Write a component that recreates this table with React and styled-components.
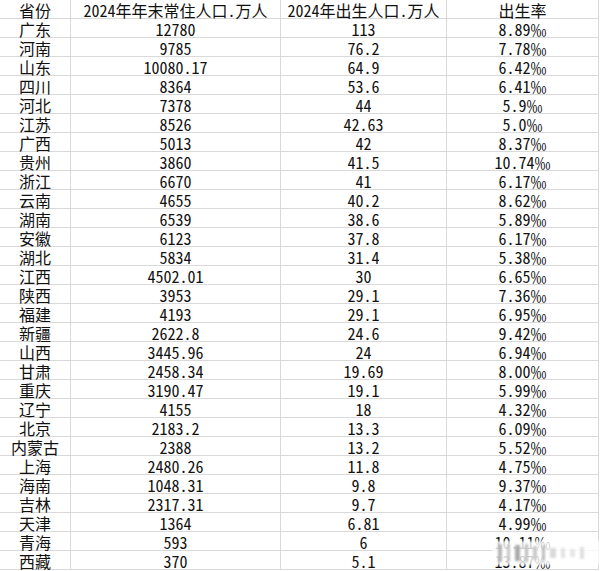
import React from 'react';
import styled, { createGlobalStyle } from 'styled-components';

const GlobalStyle = createGlobalStyle`
  html, body {
    margin: 0;
    padding: 0;
    background: #fff;
  }
`;

const rows = [
  ['广东', '12780', '113', '8.89'],
  ['河南', '9785', '76.2', '7.78'],
  ['山东', '10080.17', '64.9', '6.42'],
  ['四川', '8364', '53.6', '6.41'],
  ['河北', '7378', '44', '5.9'],
  ['江苏', '8526', '42.63', '5.0'],
  ['广西', '5013', '42', '8.37'],
  ['贵州', '3860', '41.5', '10.74'],
  ['浙江', '6670', '41', '6.17'],
  ['云南', '4655', '40.2', '8.62'],
  ['湖南', '6539', '38.6', '5.89'],
  ['安徽', '6123', '37.8', '6.17'],
  ['湖北', '5834', '31.4', '5.38'],
  ['江西', '4502.01', '30', '6.65'],
  ['陕西', '3953', '29.1', '7.36'],
  ['福建', '4193', '29.1', '6.95'],
  ['新疆', '2622.8', '24.6', '9.42'],
  ['山西', '3445.96', '24', '6.94'],
  ['甘肃', '2458.34', '19.69', '8.00'],
  ['重庆', '3190.47', '19.1', '5.99'],
  ['辽宁', '4155', '18', '4.32'],
  ['北京', '2183.2', '13.3', '6.09'],
  ['内蒙古', '2388', '13.2', '5.52'],
  ['上海', '2480.26', '11.8', '4.75'],
  ['海南', '1048.31', '9.8', '9.37'],
  ['吉林', '2317.31', '9.7', '4.17'],
  ['天津', '1364', '6.81', '4.99'],
  ['青海', '593', '6', '10.11'],
  ['西藏', '370', '5.1', '13.87'],
];

const Sheet = styled.div`
  position: relative;
  width: 602px;
  height: 571px;
  overflow: hidden;
  background: #fff;
`;

const Grid = styled.div`
  display: grid;
  grid-template-columns: 71px 210px 166px 152px;
  grid-auto-rows: 19px;
  width: 599px;
  font-family: "Noto Sans Mono CJK SC", "Noto Sans CJK SC", "Liberation Mono", monospace;
  font-size: 16px;
  font-weight: 300;
  color: #111;
`;

const Cell = styled.div`
  display: flex;
  align-items: center;
  justify-content: center;
  padding-top: 2px;
  box-sizing: border-box;
  border-right: 1px solid #d9d9d9;
  border-bottom: 1px solid #d9d9d9;
  line-height: 17px;
  white-space: nowrap;
  overflow: visible;
  letter-spacing: ${p => (p.$tight ? '-0.5px' : '0')};
`;

const Watermark = styled.div`
  position: absolute;
  left: 492px;
  top: 541px;
  width: 108px;
  height: 24px;
  background: rgba(255, 255, 255, 0.8);
  filter: blur(1.2px);
  display: flex;
  align-items: center;
  gap: 5px;
  padding-left: 6px;
  box-sizing: border-box;
`;

const Stroke = styled.span`
  display: block;
  width: ${p => p.$w}px;
  height: ${p => p.$h}px;
  background: ${p => p.$c};
`;

const marks = [
  [4, 18, '#b5b5b5'], [3, 18, '#c4c4c4'], [5, 16, '#aaa'], [3, 18, '#bbb'],
  [4, 14, '#c9c9c9'], [3, 16, '#bdbdbd'], [6, 10, '#dadada'], [4, 10, '#e2e2e2'],
  [5, 8, '#e6e6e6'], [4, 12, '#e0e0e0'],
];

export default function App() {
  return (
    <Sheet>
      <GlobalStyle />
      <Grid>
        <Cell>省份</Cell>
        <Cell>2024年年末常住人口.万人</Cell>
        <Cell>2024年出生人口.万人</Cell>
        <Cell>出生率</Cell>
        {rows.map(r => (
          <React.Fragment key={r[0]}>
            <Cell>{r[0]}</Cell>
            <Cell>{r[1]}</Cell>
            <Cell>{r[2]}</Cell>
            <Cell>{r[3]}‰</Cell>
          </React.Fragment>
        ))}
      </Grid>
      <Watermark>
        {marks.map((m, i) => (
          <Stroke key={i} $w={m[0]} $h={m[1]} $c={m[2]} />
        ))}
      </Watermark>
    </Sheet>
  );
}
